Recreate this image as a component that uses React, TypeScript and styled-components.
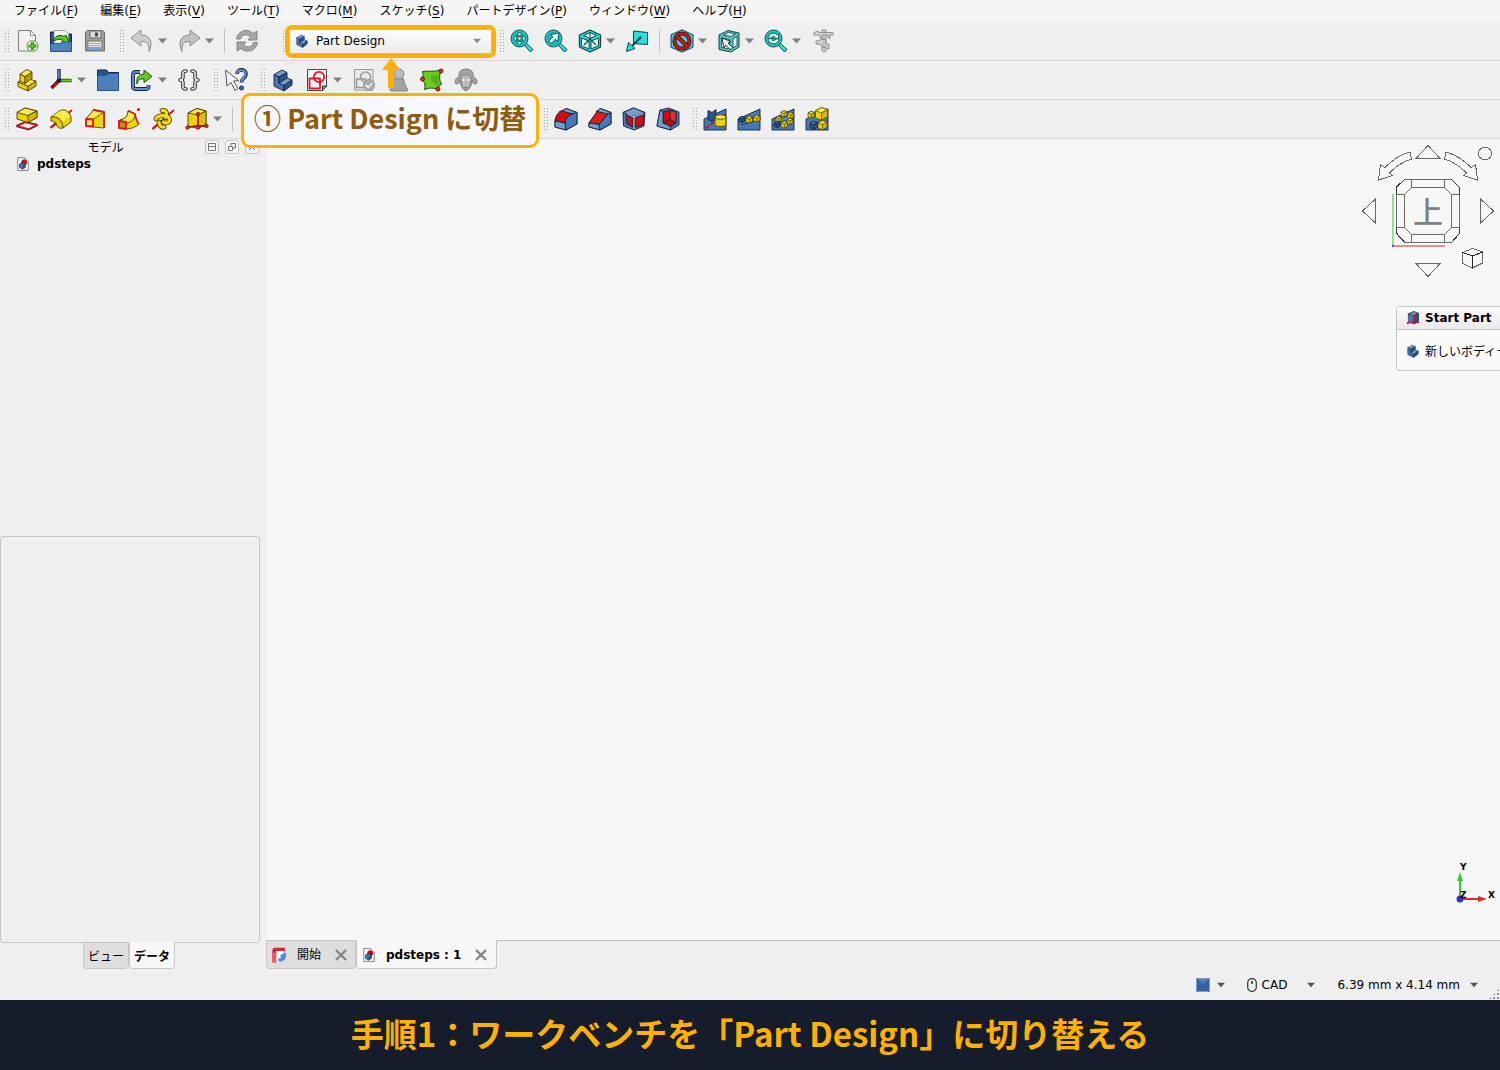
import React from "react";
import styled, { createGlobalStyle } from "styled-components";

const ui = `"DejaVu Sans", "Noto Sans CJK JP", sans-serif`;
const jp = `"Noto Sans CJK JP", "Noto Sans", sans-serif`;
const line = "#c6c6c6";
const amber = "#ffb000";

const Global = createGlobalStyle`
  * { box-sizing: border-box; }
  body { margin: 0; background: #efefef; color: #000; font: 12px/16px ${ui}; }
  button, select { font: inherit; color: inherit; }
  svg { display: block; flex: none; }
`;

/* ---------- layout ---------- */
const Page = styled.div`
  display: flex;
  flex-direction: column;
  min-height: 100vh;
  overflow: hidden;
`;
const MenuBar = styled.nav`
  display: flex;
  gap: 22px;
  height: 22px;
  padding: 0 14px;
  background: #f5f5f5;
`;
const MenuItem = styled.button`
  padding: 0;
  border: 0;
  background: none;
  font: 12px/22px ${ui};
  white-space: nowrap;
  u { text-underline-offset: 2px; }
`;
const Toolbars = styled.header`
  position: relative;
`;
const ToolRow = styled.div`
  display: flex;
  align-items: center;
  height: 39px;
  border-bottom: 1px solid #d6d6d6;
`;
const Group = styled.div<{ $before?: number }>`
  display: flex;
  align-items: center;
  padding: 0 3px 0 4px;
  margin-left: ${(p) => p.$before ?? 0}px;
`;
const Handle = styled.span`
  width: 6px;
  height: 24px;
  background-image: radial-gradient(circle, #a4a4a4 0.8px, transparent 1px);
  background-size: 3px 3px;
`;
const ToolButton = styled.button<{ $menu?: boolean }>`
  display: flex;
  align-items: center;
  width: ${(p) => (p.$menu ? 47 : 34)}px;
  height: 34px;
  padding: 0 5px;
  gap: 4px;
  border: 0;
  background: none;
`;
const Separator = styled.span`
  width: 1px;
  height: 24px;
  margin: 0 5px;
  background: #c2c2c2;
`;
const Spacer = styled.span`
  width: 298px;
`;
const WorkbenchBox = styled.label`
  display: flex;
  align-items: center;
  position: relative;
  width: 203px;
  height: 25px;
  margin-left: 1px;
  padding-left: 5px;
  border: 1px solid #b9b9c4;
  border-radius: 3px;
  background: linear-gradient(#fcfcfc, #ececec);
  box-shadow: 0 0 0 4px ${amber};
`;
const WorkbenchSelect = styled.select`
  flex: 1;
  height: 23px;
  padding: 0 7px;
  border: 0;
  background: none;
  appearance: none;
`;
const BoxArrow = styled.span`
  display: flex;
  padding-right: 10px;
`;
const Callout = styled.div`
  position: absolute;
  z-index: 2;
  left: 241px;
  top: 71px;
  padding: 0 10px 5px;
  border: 3px solid ${amber};
  border-radius: 9px;
  background: #f7f8fd;
  color: #8f5b0c;
  font: 700 27px/44px ${jp};
  white-space: nowrap;
`;
const CalloutArrow = styled.svg`
  position: absolute;
  z-index: 3;
  left: 382px;
  top: 36px;
`;
const Main = styled.main`
  flex: 1;
  display: flex;
`;
const Side = styled.aside`
  display: flex;
  flex-direction: column;
  flex: none;
  width: 260px;
  margin-right: 6px;
`;
const DockTitle = styled.div`
  display: flex;
  align-items: center;
  height: 16px;
  gap: 6px;
  padding: 0 1px 0 12px;
  span { flex: 1; text-align: center; font: 12px/18px ${jp}; }
`;
const DockButton = styled.button`
  display: grid;
  place-items: center;
  width: 14px;
  height: 14px;
  padding: 0;
  border: 1px solid #c8c8c8;
  border-radius: 2px;
  background: #f4f4f4;
`;
const Tree = styled.ul`
  flex: 1;
  margin: 0;
  padding: 0 0 0 16px;
  list-style: none;
`;
const TreeItem = styled.li`
  display: flex;
  align-items: center;
  gap: 7px;
  height: 18px;
  font-weight: 700;
`;
const PropertyBox = styled.section`
  height: 407px;
  border: 1px solid ${line};
  border-radius: 3px;
`;
const SideTabs = styled.div`
  display: flex;
  justify-content: center;
  height: 58px;
  padding: 0 2px 31px 0;
  margin-top: -1px;
`;
const SideTab = styled.button<{ $on?: boolean }>`
  height: 27px;
  padding: 0 4px;
  border: 1px solid ${line};
  border-top-color: ${(p) => (p.$on ? "#f7f7f7" : line)};
  border-radius: 0 0 4px 4px;
  background: ${(p) => (p.$on ? "#f7f7f7" : "#dedede")};
  font: ${(p) => (p.$on ? 700 : 400)} 12px/24px ${jp};
`;
const Work = styled.div`
  flex: 1;
  min-width: 0;
  display: flex;
  flex-direction: column;
`;
const View = styled.section`
  position: relative;
  flex: 1;
  overflow: hidden;
  background: #f7f7f7;
  border-bottom: 1px solid #bdbdbd;
`;
const NavCube = styled.svg`
  position: absolute;
  top: 0;
  right: 0;
`;
const AxisCross = styled.svg`
  position: absolute;
  right: 0;
  bottom: 30px;
`;
const TaskPanel = styled.section`
  position: absolute;
  top: 167px;
  right: -6px;
  width: 110px;
  height: 65px;
  border: 1px solid ${line};
  border-radius: 3px;
  background: #fafafa;
  overflow: hidden;
  white-space: nowrap;
`;
const TaskTitle = styled.h2`
  display: flex;
  align-items: center;
  gap: 5px;
  height: 23px;
  margin: 0;
  padding-left: 9px;
  border-bottom: 1px solid ${line};
  background: linear-gradient(#fbfbfb, #e9e9e9);
  font: 700 12px/22px ${ui};
`;
const TaskAction = styled.button`
  display: flex;
  align-items: center;
  gap: 5px;
  height: 41px;
  padding: 0 0 0 9px;
  border: 0;
  background: none;
  font: 12px/24px ${jp};
  white-space: nowrap;
`;
const DocTabs = styled.div`
  display: flex;
  height: 29px;
  margin-top: -1px;
  position: relative;
`;
const DocTab = styled.div<{ $on?: boolean }>`
  display: flex;
  align-items: center;
  gap: 10px;
  height: 29px;
  padding: ${(p) => (p.$on ? "0 8px 0 5px" : "0 7px 0 4px")};
  border: 1px solid ${line};
  border-top-color: ${(p) => (p.$on ? "#f7f7f7" : line)};
  border-radius: 0 0 4px 4px;
  background: ${(p) => (p.$on ? "#f7f7f7" : "#dedede")};
  font-weight: ${(p) => (p.$on ? 700 : 400)};
`;
const TabClose = styled.button`
  display: flex;
  margin-left: 3px;
  padding: 0;
  border: 0;
  background: none;
`;
const StatusBar = styled.footer`
  position: relative;
  display: flex;
  align-items: center;
  justify-content: flex-end;
  height: 31px;
  padding: 0 22px 0 0;
`;
const StatusButton = styled.button<{ $gap?: number }>`
  display: flex;
  align-items: center;
  gap: ${(p) => p.$gap ?? 4}px;
  margin-left: 22px;
  padding: 0;
  border: 0;
  background: none;
  white-space: nowrap;
`;
const StatusLabel = styled.span`
  display: flex;
  align-items: center;
  gap: 5px;
`;
const Grip = styled.span`
  position: absolute;
  right: 0;
  bottom: 0;
  width: 12px;
  height: 12px;
  background-image: radial-gradient(circle, #8c8c8c 1px, transparent 1.2px);
  background-size: 4px 4px;
  clip-path: polygon(100% 0, 100% 100%, 0 100%);
`;
const Caption = styled.div`
  display: flex;
  justify-content: center;
  height: 70px;
  background: #151c2b;
  color: ${amber};
  font: 700 33px/66px ${jp};
  white-space: nowrap;
`;

/* ---------- drawings ---------- */
const K = "#10202c";
const Y1 = "#fce94f", Y2 = "#edd400", Y3 = "#b89a00", YK = "#4a4100";
const B1 = "#729fcf", B2 = "#4478b6", B3 = "#28548f", BK = "#12233a";
const R1 = "#ef2929", R2 = "#d40c0c";
const C1 = "#2fdcdc", C2 = "#10a8aa", CK = "#0b4648";

const I = ({ children, s = 24 }: { children: React.ReactNode; s?: number }) => (
  <svg width={s} height={s} viewBox="0 0 24 24" fill="none" strokeLinejoin="round" aria-hidden="true">{children}</svg>
);
const Down = ({ c = "#808080", w = 9 }: { c?: string; w?: number }) => (
  <svg width={w} height="6" viewBox="0 0 9 6" aria-hidden="true"><path d="M0 .5h9L4.500 5.500z" fill={c} /></svg>
);

const bodyShape = (
  <g stroke={BK} strokeWidth=".9">
    <path d="M3 6.500l5 2.500v6l5 2.500V23L3 18z" fill={B2} />
    <path d="M3 6.500L11 2l5 2.500L8 9z" fill={B1} />
    <path d="M8 9l8-4.500V10l-8 5z" fill={B3} />
    <path d="M8 15l8-5 5 2-8 5.500z" fill={B1} />
    <path d="M13 17.500l8-5.500v5l-8 6z" fill={B3} />
  </g>
);
const lens = (
  <g>
    <path d="M14 16l2-2 7 6.500-2.500 2.500z" fill={C1} stroke={CK} />
    <circle cx="9.500" cy="9.500" r="8" fill={C1} stroke={C2} strokeWidth="1" />
    <circle cx="9.500" cy="9.500" r="8.500" stroke={CK} strokeWidth=".9" />
    <circle cx="9.500" cy="9.500" r="6.300" fill="#1fb4b6" stroke={C2} />
  </g>
);
const cubeWire = (
  <g stroke={CK}>
    <path d="M12 1l10.500 5v12L12 23 1.500 18V6z" fill={C1} strokeWidth="1.300" />
    <path d="M12 3.500l6.500 3-6.500 3-6.500-3z M3.500 9L11 12v8L3.500 16.800z M20.500 9L13 12v8l7.500-3.200z" fill="#e8f5f5" strokeWidth="1" />
    <path d="M12 3v7l-6 6M12 10l6 6" strokeWidth="1.100" />
  </g>
);
const slope = <path d="M1 23V12L23 2v21z" fill={B2} stroke={BK} strokeWidth=".9" />;
const miniCube = (x: number, y: number, s: number, blue?: boolean) => (
  <g transform={`translate(${x} ${y}) scale(${s})`} stroke={blue ? BK : YK} strokeWidth={0.7 / s}>
    <path d="M0 3l5-2.500L10 2v6l-5 3-5-2z" fill={blue ? B3 : Y2} />
    <path d="M0 3l5-2.500L10 2 5 5z" fill={blue ? B2 : Y1} />
    <path d="M5 5l5-3v6l-5 3z" fill={blue ? B3 : "#d4b800"} />
  </g>
);
const docPage = (
  <g>
    <path d="M3 1h12l6 6v16H3z" fill="#f8f8f8" stroke="#777" strokeWidth="1.500" />
    <path d="M15 1v6h6" fill="#ddd" stroke="#999" />
    <circle cx="14" cy="9" r="4.500" fill={R2} stroke="#600" />
    <path d="M6 12l5-2 5 2v6l-5 3-5-3z" fill={B2} stroke={BK} />
    <path d="M11 14l5-2v6l-5 3z" fill={B3} />
  </g>
);

const ic: Record<string, React.ReactNode> = {
  new: (
    <g>
      <path d="M3.500 1.500h12l5 5V22h-17z" fill="#f1f1ef" stroke="#7b7e79" />
      <path d="M15.500 1.500l5 5h-5z" fill="#fff" stroke="#777" strokeWidth=".8" />
      <circle cx="17.500" cy="17" r="5.500" fill="#eef6e8" stroke="#477a38" strokeWidth=".8" />
      <path d="M17.500 13v8M13.500 17h8" stroke="#2f7d12" strokeWidth="3" />
      <path d="M17.500 13.700v6.600M14.200 17h6.600" stroke="#5cc81e" strokeWidth="1.500" />
    </g>
  ),
  open: (
    <g>
      <path d="M1.500 22V3h5l2 2h14v17z" fill={B3} stroke={BK} />
      <path d="M5 16V1.500h11l3.500 3V16z" fill="#f4f4f4" stroke="#888" strokeWidth=".8" />
      <path d="M4 13c1-6 7-8 11-5.500l2-1.500 3.500 8-8.500 0 2-2.500c-4-2-7-1-10 1.500z" fill="#5bc81c" stroke="#245010" />
      <path d="M1.500 14.500H12l1-1.500h9.500v9.500h-21z" fill="#4f83bd" stroke={B3} />
    </g>
  ),
  save: (
    <g>
      <path d="M2.500 3l2-1.500h15l2 1.500v19h-19z" fill="#9c9f9b" stroke="#6e6e6e" />
      <path d="M7 2h11v7H7z" fill="#d8d8d6" stroke="#6b6b6b" />
      <path d="M12 3.500h3v4h-3z" fill="#4a4a4a" />
      <path d="M5 12h14v9H5z" fill="#e8e8e8" stroke="#777" />
      <path d="M6.500 14.500h11M6.500 16.500h11" stroke="#aaa" />
      <path d="M5.500 18h13v3h-13z" fill="#7b9ed0" />
    </g>
  ),
  undo: <path d="M1 9L11 1v5c8 0 13 6 8 16.500C19.500 15 17 12 11 12.500V17z" fill="#cdcdcd" stroke="#8c8c8c" />,
  redo: <path d="M23 9L13 1v5C5 6 0 12 5 22.500 4.500 15 7 12 13 12.500V17z" fill="#c2c2c2" stroke="#8c8c8c" />,
  refresh: (
    <g fill="#a6a6a6" stroke="#7c7c7c" strokeWidth=".9">
      <path d="M1.500 10C3 1 13-1 18 4.500L22 2v9h-9l2.500-3C11.500 4 6.500 6 5.500 10z" />
      <path d="M22.500 13.500C21 22.500 11 24.500 6 19.500L2 22v-9h9l-2.500 3c4 3.500 9 2 10-2.500z" />
    </g>
  ),
  fit: (
    <g>{lens}<path d="M9.500 3.500l2.700 3H6.800zM9.500 15.500l2.700-3H6.800zM3.500 9.500l3-2.700v5.400zM15.500 9.500l-3-2.700v5.400z" fill="#e4ffff" stroke={CK} strokeWidth=".7" /><path d="M8 8h3v3H8z" fill="#e4ffff" stroke={CK} strokeWidth=".7" /></g>
  ),
  fitSel: <g>{lens}<path d="M15 4l-1.500 8.500-2.200-2.200-4.300 4.200L4.700 12 9 7.900 6.700 5.600z" fill="#e8ffff" stroke={CK} strokeWidth=".9" /></g>,
  iso: cubeWire,
  align: (
    <g>
      <path d="M8.500 2l14 1.500v12l-14-1z" fill={C1} stroke={CK} />
      <path d="M16 8l-9 9" stroke={CK} strokeWidth="2" />
      <path d="M1.500 22.500l2-9 6.500 6z" fill={C1} stroke={CK} />
      <path d="M13.500 8l3-.5-.5 3z" fill={CK} />
    </g>
  ),
  draw: (
    <g>
      <path d="M12 .8l11 5v12.400l-11 5-11-5V5.800z" fill={C1} stroke={CK} />
      <circle cx="12" cy="12" r="7.500" stroke="#400" strokeWidth="4" />
      <circle cx="12" cy="12" r="7.500" stroke="#d31515" strokeWidth="2.500" />
      <path d="M7 7l10 10" stroke="#400" strokeWidth="4" />
      <path d="M6.500 6.500l11 11" stroke="#d31515" strokeWidth="2.500" />
    </g>
  ),
  select: (
    <g>
      <path d="M2 6l9-4.500L22 4v14l-8 5-12-2.500z" fill="#5cc0c0" stroke={CK} />
      <path d="M4.500 9l8 1.500v9.500l-8-1.500zM16 10l4-2.500V16l-4 3zM6.500 6l5-2.500L18.500 5 14 7.500z" fill="#dff3f3" stroke={CK} strokeWidth=".8" />
      <path d="M5 9l9 3.500-3 1.500 4.500 4.500-2.300 2.300L8.700 16 7 19z" fill="#eee" stroke={K} strokeWidth=".9" />
    </g>
  ),
  viewSync: <g>{lens}<path d="M4 9c1-5 6.500-6 9-3l1.500-1v4.500H10l1.300-1.500C9 6.500 7.500 7.500 7 9zM15 10c-1 5-6.500 6-9 3L4.500 14V9.500H9L7.700 11c2 1.500 3.500.5 4.300-1z" fill="#dff" stroke={CK} strokeWidth=".7" /></g>,
  caliper: (
    <g fill="#d0d0d0" stroke="#8b8b8b" strokeWidth=".9">
      <path d="M11 1h4v21l-2 1-2-1z" />
      <path d="M3 3.500l4-1.500 1 1.500h14v2.500h-3v4l-2-1.500V6h-6v6L8 6H3z" />
      <path d="M5 12l6-1.500h4V15h3v5l-3-1v-1h-4v-1.500L8 15H5z" />
      <path d="M13 8v12" stroke="#777" strokeDasharray="1 1" />
    </g>
  ),
  part: (
    <g stroke={YK} strokeWidth=".9">
      <path d="M3 14l7-4 11 3-8 5.500z" fill={Y1} />
      <path d="M3 14l10 4.500V23L3 18.500z" fill={Y2} />
      <path d="M13 18.500l8-5.500v5l-8 5z" fill="#d4b800" />
      <path d="M5 6l5 2.500v7L5 13z" fill={Y2} />
      <path d="M10 8.500L17 4v6.500l-7 5z" fill={Y3} />
      <path d="M5 6l7-4.500L17 4l-7 4.500z" fill={Y1} />
    </g>
  ),
  lcs: (
    <g strokeLinecap="butt">
      <path d="M10 13V1" stroke={BK} strokeWidth="3.400" /><path d="M10 13V1.700" stroke="#4f83bd" strokeWidth="1.900" />
      <path d="M10 12.500h12.500" stroke="#173808" strokeWidth="3.400" /><path d="M10 12.500H22" stroke="#73d216" strokeWidth="1.900" />
      <path d="M10 12.500l-7.500 7.500" stroke="#300" strokeWidth="3.400" /><path d="M10 12.500l-7 7" stroke={R2} strokeWidth="2" />
      <circle cx="10" cy="12.500" r="2.300" fill="#222" />
    </g>
  ),
  folder: (
    <g stroke={B3}>
      <path d="M1.500 22V2h9l2 2.500h10V22z" fill={B3} stroke={BK} />
      <path d="M1.500 7.500h9l2-2h10V22.500h-21z" fill="#4c80bb" />
    </g>
  ),
  link: (
    <g>
      <path d="M10 4H5.500Q3 4 3 6.500v12Q3 21 5.500 21h10.500q2.500 0 2.500-2.500V17" stroke={BK} strokeWidth="3.800" />
      <path d="M10 4H5.500Q3 4 3 6.500v12Q3 21 5.500 21h10.500q2.500 0 2.500-2.500V17" stroke="#5b8cc8" strokeWidth="2" />
      <path d="M7 16C6 9 9 6 14 6V2l8 6.500-8 6V11c-4-.5-6 1-7 5z" fill="#62cc20" stroke="#234d10" />
    </g>
  ),
  braces: (
    <g strokeLinecap="round">
      {["#2e3436", "#fff"].map((c, i) => (
        <path key={c} stroke={c} strokeWidth={i ? 1.4 : 3.6} d="M9 3C5 3 6 6 6 8.500 6 11 5 12 3 12c2 0 3 1 3 3.500C6 18 5 21 9 21M15 3c4 0 3 3 3 5.500 0 2.500 1 3.500 3 3.500-2 0-3 1-3 3.500 0 2.500 1 5.500-3 5.500" />
      ))}
    </g>
  ),
  help: (
    <g>
      <path d="M13 6c0-5.500 9-5.500 9 0 0 4-4.500 4-4.500 8.500" stroke={BK} strokeWidth="3.600" />
      <path d="M13 5.500c.5-4.500 8.500-4.500 8.500 .5 0 4-4 4-4 8" stroke="#6b98cf" strokeWidth="2" />
      <circle cx="17.500" cy="20" r="2" fill="#3f70b0" stroke={BK} />
      <path d="M1.500 2l13 10.500-5 .5 4.500 7.500-3 2-4-8-4 3.500z" fill="#f3f3f3" stroke="#555" />
    </g>
  ),
  body: bodyShape,
  sketch: (
    <g>
      <path d="M2.500 1.500h19V18l-4 4.500h-15z" fill="#f3f3f3" stroke="#444" />
      <path d="M17.500 22.500V18h4z" fill="#aaa" stroke="#333" />
      <path d="M4.500 10.500h10.500v10H4.500z" stroke="#e01b24" strokeWidth="1.800" />
      <circle cx="14" cy="9" r="5.200" stroke="#e01b24" strokeWidth="1.800" />
    </g>
  ),
  sketchOk: (
    <g>
      <path d="M2.500 1.500h18.500V22H2.500z" fill="#e9e9e9" stroke="#999" />
      <path d="M4.500 11h9v8.500h-9z" stroke="#999" strokeWidth="1.500" />
      <circle cx="13.500" cy="9" r="5" stroke="#999" strokeWidth="1.500" />
      <circle cx="17" cy="17" r="5.500" fill="#aaa" stroke="#999" />
      <path d="M13.800 17l2.500 2.500 4-4.500" stroke="#eee" strokeWidth="1.800" />
    </g>
  ),
  map: (
    <g stroke="#858585">
      <path d="M5 23c-2-1-1-3 1-4l3-9h8l3 9c2 1 2 3 1 4z" fill="#a4a4a4" />
      <circle cx="13" cy="6" r="5" fill="#bbb" />
    </g>
  ),
  surface: (
    <g>
      <path d="M2.500 3.500c6-1 12 1 19-2-3 7-2 11 0 15-3 1-3 2-3 6-4-3-9-3-14-1C6 17 4 14 2 11c2-2 1-5 .500-7.500z" fill="#6cc91e" stroke="#1c4a08" />
      <path d="M11 8c4 0 7-1 8-3-1 6-1 9 0 13-4-1-8-4-8-10z" fill="#3da311" opacity=".6" />
      {[[21, 3], [2.500, 11], [18, 21]].map(([x, y]) => <circle key={x} cx={x} cy={y} r="2" fill={R1} stroke="#500" strokeWidth=".8" />)}
    </g>
  ),
  sheep: (
    <g stroke="#7e7e7e" strokeWidth=".9">
      <path d="M5 9C4 3 8 1 12 1s8 2 7 8c4 1 5 5 3 7-3 0-4-2-4-4 0 5-2 9-6 11-4-2-6-6-6-11 0 2-1 4-4 4-2-2-1-6 3-7z" fill="#a2a2a2" />
      <path d="M7 9c2-3 8-3 10 0 0 6-1 11-5 13-4-2-5-7-5-13z" fill="#bababa" strokeWidth=".8" />
      <path d="M8.500 12h2M13.500 12h2" stroke="#fff" strokeWidth="2" /><path d="M10.500 19l1.500 1 1.500-1" stroke="#555" />
    </g>
  ),
  pad: (
    <g>
      <path d="M2.500 19l8-3.500 11 2.500-8 4z" stroke="#500" strokeWidth="2.600" /><path d="M2.500 19l8-3.500 11 2.500-8 4z" fill="#eee" stroke="#e01b24" strokeWidth="1.300" />
      <g stroke={YK} strokeWidth=".9"><path d="M2 5.500V12l11 3.500 9-5V4l-12-3z" fill={Y2} /><path d="M2 5.500L10 1l12 3-9 4.500z" fill={Y1} /><path d="M13 8.500L22 4v6.500l-9 5z" fill="#d4b800" /></g>
    </g>
  ),
  revolve: (
    <g>
      <path d="M1.500 21L23 3" stroke={R2} strokeWidth="1.800" />
      <path d="M2 10l9-6.500c6-2 9 1 11 6.500v5l-8 6c-1-7-5-11-12-11z" fill={Y2} stroke={YK} strokeWidth=".9" />
      <path d="M2.500 9.800L11 4c5-1.500 8 1 10 5.500l-7 5C12 10 8 8.500 2.500 9.800z" fill={Y1} />
      <path d="M2 10c7-1 12 4 12 11-4 1-6-1-7-4-1-2-3-3-5-3z" fill="#e4c800" stroke={YK} strokeWidth=".9" />
      <path d="M2 20.500L7 16" stroke={R2} strokeWidth="1.800" />
    </g>
  ),
  loft: (
    <g>
      <path d="M3 12l7.500-9L21 5v16l-11-1-7-1z" fill={Y2} stroke={YK} strokeWidth=".8" />
      <path d="M3 12l7.500-9L21 5l-11 7.500z" fill={Y1} stroke={YK} strokeWidth=".8" />
      <path d="M10 2.800L21 5v16" stroke="#d81920" strokeWidth="1.900" />
      <path d="M3 12l7 .5v7L3 19z" fill={Y1} stroke="#d81920" strokeWidth="1.900" />
    </g>
  ),
  pipe: (
    <g>
      <path d="M3 13c5-1 8-4 8-9l7 3c1 5 2 8 4 10-3 3-8 5-13 5z" fill={Y2} stroke={YK} strokeWidth=".9" />
      <path d="M3 13c5-1 8-4 8-9l7 3c0 5-4 9-9 9z" fill={Y1} stroke={YK} strokeWidth=".8" />
      <path d="M11 3.500l7 3.500c1 5 2 8 4 10" stroke="#d81920" strokeWidth="1.500" />
      <path d="M2 14l7 1v7l-7-1z" fill={Y3} stroke="#d81920" strokeWidth="2" />
      <circle cx="21.500" cy="2.500" r="1.500" fill={R2} />
    </g>
  ),
  helix: (
    <g>
      <path d="M1.500 22L23 3" stroke={R2} strokeWidth="1.700" />
      {[YK, Y2, Y1].map((c, i) => (
        <path key={c} stroke={c} strokeWidth={[4.8, 3.2, 1][i]} strokeLinecap="round" d="M11 3.500c4-1 6 3 3.500 7M5 12c1-4 12-5 13.500 0 .500 4-3.500 5-6 3M8 15c0 4 3 6 5 5" />
      ))}
      <path d="M1.500 22l5-4.500" stroke={R2} strokeWidth="1.700" />
    </g>
  ),
  primitive: (
    <g>
      <path d="M3 6v13l10 2.500 8-4.500V4l-9-2.500z" fill={Y2} stroke={YK} strokeWidth=".9" />
      <path d="M3 6l9-4.500L21 4l-8 4z" fill={Y1} stroke={YK} strokeWidth=".9" />
      <path d="M13 8l8-4v13l-8 4.500z" fill="#dcc000" stroke={YK} strokeWidth=".9" />
      <path d="M13 7v11.500L2.500 20.500M13 18.500l8.500 1" stroke="#b40808" strokeWidth="1.500" />
      {[[13, 7], [13, 20.5], [2.500, 20.5], [21.500, 19]].map(([x, y]) => <circle key={`${x}-${y}`} cx={x} cy={y} r="1.800" fill={R1} stroke="#500" strokeWidth=".6" />)}
    </g>
  ),
  fillet: (
    <g stroke={BK} strokeWidth=".9">
      <path d="M1 20v-6C2 8 5 5 12.500 1.500l10.500 4V17l-11 6z" fill={B2} />
      <path d="M5 5l7.500-3.500 10.500 4-4 2z" fill={B1} />
      <path d="M1 14C2 8 4 5.500 8 4l11 3c-5 1-7 4-8 9z" fill={R2} />
      <path d="M1 14l10 2 1 7-11-3z" fill={B1} />
      <path d="M11 16c1-6 4-8.500 12-10.500V17l-11 6z" fill={B2} />
    </g>
  ),
  chamfer: (
    <g stroke={BK} strokeWidth=".9">
      <path d="M1 16L12 1.500l11 4V17l-11 6-11-3z" fill={B2} />
      <path d="M8 4.500l4.500-3 10.500 4-4 2z" fill={B1} />
      <path d="M1 16L9 4.500l11 2.500-9 10.500z" fill="#e01b1b" />
      <path d="M1 16l10 1.500 1 5.500-11-3z" fill={B1} />
      <path d="M11 17.500L20 7l3-1.500V17l-11 6z" fill={B2} />
    </g>
  ),
  draft: (
    <g stroke={BK} strokeWidth=".9">
      <path d="M1 5.500l10.500-4.500L23 5.500l-1 13.500-10 4-10.500-4z" fill={B2} />
      <path d="M1 5.500l10.500-4.500L23 5.500l-11 4z" fill={B1} />
      <path d="M4 8l7 3v9l-6-3z" fill="#c01414" /><path d="M13 11l9-3.500-.5 10-8.500 3z" fill={R2} />
      <path d="M12 10v12M5 6.500l7 3.500 9.500-3.500" stroke="#e8eef5" strokeWidth=".8" />
    </g>
  ),
  shell: (
    <g stroke={BK} strokeWidth=".9">
      <path d="M4 3l8.500-2L23 5v13l-8.500 5L1 19z" fill={B2} />
      <path d="M7 5l7-2 6 2.500V16l-6 3.500L7 16z" fill={R2} />
      <path d="M14 3l6 2.500V16l-6-3.500z" fill={R1} />
      <path d="M14 12.500l6 3.500-6 3.500L7 16z" fill="#b80d0d" />
      <path d="M4 3l3 2v11l7.500 3.500V23L1 19z" fill={B1} />
    </g>
  ),
  mirror: (
    <g>
      {slope}
      <path d="M5 3.500l4 2 4-3v9l-4 3-4-2z" fill={B3} stroke={BK} strokeWidth=".9" />
      <path d="M3 21L23 7" stroke={R2} strokeWidth="1.800" strokeDasharray="4 1.500" />
      <path d="M12 10.500v7.500c1 2 10 2 11 0v-7.500z" fill={Y2} stroke={YK} strokeWidth=".9" /><ellipse cx="17.500" cy="10" rx="5.500" ry="2.200" fill={Y1} stroke={YK} strokeWidth=".9" />
    </g>
  ),
  linear: <g>{slope}<path d="M4 18l17-5" stroke={BK} strokeWidth=".8" />{miniCube(2, 9, 0.6, true)}{miniCube(9, 9, 0.65)}{miniCube(16.5, 8, 0.65)}</g>,
  polar: <g>{slope}<path d="M1 16L23 9" stroke={B1} />{miniCube(5, 9, 0.55)}{miniCube(10, 3.5, 0.6)}{miniCube(16.5, 5, 0.6)}{miniCube(16, 11, 0.6)}{miniCube(10, 14, 0.65)}{miniCube(3, 14, 0.6, true)}</g>,
  multi: <g>{slope}{miniCube(10.5, 0, 1.2)}{miniCube(3, 4, 0.65)}{miniCube(5, 14, 0.75, true)}{miniCube(13, 13, 0.9)}</g>,
  doc: docPage,
  start: (
    <g stroke={BK}>
      <path d="M4 5l9-4 8 3v14l-8 4-9-3z" fill={B2} />
      <path d="M4 5l9-4 8 3-7 4z" fill={B1} /><path d="M14 8l7-4v14l-7 4z" fill={B3} />
      <path d="M14 7v11L2 21M14 18l9 2" stroke={R2} strokeWidth="1.800" />
      <circle cx="3" cy="21" r="2" fill={R1} stroke="none" /><circle cx="14" cy="7" r="2" fill={R1} stroke="none" />
    </g>
  ),
  logo: (
    <g>
      <path d="M2 5q0-4 4-4h15v6H9v16H2z" fill="#cb2c3c" />
      <path d="M2 8h6v15H2z" fill="#fb5261" />
      <path d="M8 6h12v4h-1l-1 1h-3v1h3v4h-6v6H8z" fill="#fff" />
      <path d="M14 12l4-1 1-3 2 1 2 0-1 3 1 3-2 2 0 3-3 0-2 2-3-1-2 1v-5h4z" fill="#408ee0" />
    </g>
  ),
};

type Tool = [string, string, boolean?] | "|";
const Tools = ({ items }: { items: Tool[] }) => (
  <>
    {items.map((t, i) =>
      t === "|" ? <Separator key={i} /> : (
        <ToolButton key={i} $menu={t[2]} aria-label={t[1]}>
          <I>{ic[t[0]]}</I>
          {t[2] && <Down />}
        </ToolButton>
      )
    )}
  </>
);

const Bar = ({ items, before }: { items: Tool[]; before?: number }) => (
  <Group $before={before}><Handle /><Tools items={items} /></Group>
);

const menus: [string, string][] = [
  ["ファイル", "F"], ["編集", "E"], ["表示", "V"], ["ツール", "T"], ["マクロ", "M"],
  ["スケッチ", "S"], ["パートデザイン", "P"], ["ウィンドウ", "W"], ["ヘルプ", "H"],
];

const Cross = () => (
  <svg width="14" height="14" viewBox="0 0 14 14" aria-hidden="true"><path d="M2 2l10 10M12 2L2 12" stroke="#858585" strokeWidth="2.400" /></svg>
);

const Cube = () => (
  <NavCube width="140" height="145" viewBox="1360 139 140 145" fill="none" stroke="#6a6a6a" shapeRendering="crispEdges" aria-label="ナビゲーションキューブ">
    <path d="M1428 145.500l12 13h-24zM1428 276.500l12-13h-24zM1362.500 211l13-12v24zM1493.500 211l-13-12v24z" />
    <circle cx="1485" cy="153.500" r="6.500" />
    <path d="M1410 152Q1396 156 1385 167.500L1380.500 164.500L1378.500 180L1392.500 175.500L1389.500 173Q1399 163 1411.500 159z" />
    <path d="M1446 152Q1460 156 1471 167.500L1475.500 164.500L1477.500 180L1463.500 175.500L1466.500 173Q1457 163 1444.500 159z" />
    <path d="M1404.500 179.500h47l8 8v46l-8 9h-47l-8-9v-46z" />
    <path d="M1411.500 187.500h33l7 7v33l-7 7h-33l-7-7v-33zM1411.500 179.500v8M1444.500 179.500v8M1411.500 234.500v8M1444.500 234.500v8M1396.500 194.500h8M1396.500 227.500h8M1451.500 194.500h8M1451.500 227.500h8" />
    <path d="M1396.500 194v-7l8-7.500M1451.500 179.500l8 8v7M1396.500 228v5l8 9M1451.500 242.500l8-9v-6" stroke="#333" />
    <path d="M1393 194v51" stroke="#8fe08f" strokeWidth="2" />
    <path d="M1393 246h52" stroke="#e48f8f" strokeWidth="2" />
    <path d="M1392 245h2v2h-2z" fill="#4a4ad8" stroke="none" />
    <text x="1428" y="223" textAnchor="middle" fontSize="30" fontWeight="500" fontFamily="Noto Sans CJK JP, sans-serif" fill="#808080" stroke="none">上</text>
    <path d="M1462.500 252.500l10-4 10 3.500v11l-10 5-10-4.500z" />
    <path d="M1462.500 252.500l10 3.500 10-4M1472.500 256v12" stroke="#222" />
  </NavCube>
);

const Axes = () => (
  <AxisCross width="50" height="50" viewBox="1450 860 50 50" fontFamily="DejaVu Sans, sans-serif" fontSize="9" fontWeight="700" aria-label="座標軸">
    <path d="M1460 899v-22" stroke="#33cc33" strokeWidth="2" />
    <path d="M1457 881l3-9 3 9z" fill="#33cc33" stroke="none" />
    <path d="M1460 899h20" stroke="#cc3333" strokeWidth="2" />
    <path d="M1478 896l9 3-9 3z" fill="#cc3333" />
    <circle cx="1460" cy="899" r="3.500" fill="#3333cc" />
    <text x="1460" y="870">Y</text>
    <text x="1488" y="898">X</text>
    <text x="1460" y="898">Z</text>
  </AxisCross>
);

export default function App() {
  return (
    <Page>
      <Global />
      <MenuBar>
        {menus.map(([name, key]) => (
          <MenuItem key={key}>{name}(<u>{key}</u>)</MenuItem>
        ))}
      </MenuBar>

      <Toolbars>
        <ToolRow>
          <Bar items={[["new", "新規"], ["open", "開く"], ["save", "保存"]]} />
          <Bar items={[["undo", "元に戻す", true], ["redo", "やり直す", true], "|", ["refresh", "更新"]]} />
          <Group $before={11}>
            <Handle />
            <WorkbenchBox>
              <I s={14}>{ic.body}</I>
              <WorkbenchSelect aria-label="ワークベンチ" defaultValue="Part Design">
                <option>Part Design</option>
              </WorkbenchSelect>
              <BoxArrow><Down c="#8c8c8c" w={8} /></BoxArrow>
            </WorkbenchBox>
          </Group>
          <Bar
            items={[
              ["fit", "全てにフィット"], ["fitSel", "選択にフィット"], ["iso", "等角図", true], ["align", "選択に整列"], "|",
              ["draw", "描画スタイル", true], ["select", "選択", true], ["viewSync", "表示", true], ["caliper", "計測"],
            ]}
          />
        </ToolRow>
        <ToolRow>
          <Bar items={[["part", "パーツ"], ["lcs", "座標系", true], ["folder", "グループ"], ["link", "リンク", true], ["braces", "変数"]]} />
          <Bar items={[["help", "ヘルプ"]]} />
          <Bar
            items={[
              ["body", "ボディー"], ["sketch", "スケッチ", true], ["sketchOk", "スケッチ検証"],
              ["map", "マップ"], ["surface", "サブシェイプ"], ["sheep", "クローン"],
            ]}
          />
        </ToolRow>
        <ToolRow>
          <Group>
            <Handle />
            <Tools
              items={[
                ["pad", "パッド"], ["revolve", "回転"], ["loft", "ロフト"], ["pipe", "パイプ"],
                ["helix", "らせん"], ["primitive", "プリミティブ", true], "|",
              ]}
            />
            <Spacer />
          </Group>
          <Bar items={[["fillet", "フィレット"], ["chamfer", "面取り"], ["draft", "抜き勾配"], ["shell", "厚み"]]} />
          <Bar items={[["mirror", "鏡像"], ["linear", "直線パターン"], ["polar", "円形パターン"], ["multi", "マルチ変換"]]} />
        </ToolRow>
        <CalloutArrow width="18" height="32" viewBox="0 0 18 32" aria-hidden="true">
          <path d="M9 0l9 12h-6v18H6V12H0z" fill={amber} />
        </CalloutArrow>
        <Callout>① Part Design に切替</Callout>
      </Toolbars>

      <Main>
        <Side>
          <DockTitle>
            <span>モデル</span>
            <DockButton aria-label="最小化">
              <svg width="8" height="8" fill="none" stroke="#777"><path d="M.5.5h7v7h-7zM.5 3.500h7" /></svg>
            </DockButton>
            <DockButton aria-label="フロート">
              <svg width="8" height="8" fill="none" stroke="#777"><path d="M.5 3.500h4v4h-4zM3 3V.5h4.500V5H5" /></svg>
            </DockButton>
            <DockButton aria-label="閉じる">
              <svg width="8" height="8" fill="none" stroke="#777"><path d="M1 1l6 6M7 1L1 7" /></svg>
            </DockButton>
          </DockTitle>
          <Tree>
            <TreeItem><I s={14}>{ic.doc}</I>pdsteps</TreeItem>
          </Tree>
          <PropertyBox aria-label="プロパティ" />
          <SideTabs>
            <SideTab>ビュー</SideTab>
            <SideTab $on>データ</SideTab>
          </SideTabs>
        </Side>
        <Work>
          <View>
            <Cube />
            <TaskPanel>
              <TaskTitle><I s={14}>{ic.start}</I>Start Part</TaskTitle>
              <TaskAction><I s={14}>{ic.body}</I>新しいボディー</TaskAction>
            </TaskPanel>
            <Axes />
          </View>
          <DocTabs>
            <DocTab>
              <I s={16}>{ic.logo}</I><span>開始</span>
              <TabClose aria-label="開始を閉じる"><Cross /></TabClose>
            </DocTab>
            <DocTab $on>
              <I s={14}>{ic.doc}</I><span>pdsteps : 1</span>
              <TabClose aria-label="pdstepsを閉じる"><Cross /></TabClose>
            </DocTab>
          </DocTabs>
          <StatusBar>
            <StatusButton $gap={7} aria-label="通知">
              <svg width="14" height="14" viewBox="0 0 14 14"><path d="M0 0h14v14H0z" fill="#3363a3" /><path d="M0 0h14L7 6z" fill="#4f80bb" /><path d="M.5.5h13v13H.5z" fill="none" stroke="#7b9cc6" /></svg>
              <Down c="#555" w={8} />
            </StatusButton>
            <StatusButton $gap={20}>
              <StatusLabel>
                <svg width="10" height="14" viewBox="0 0 10 14" fill="none" stroke="#2e3436"><rect x=".7" y=".7" width="8.600" height="12.600" rx="4" strokeWidth="1.200" /><path d="M5 3v3" strokeWidth="1.600" /></svg>
                CAD
              </StatusLabel>
              <Down c="#555" w={8} />
            </StatusButton>
            <StatusButton $gap={10}>6.39 mm x 4.14 mm<Down c="#555" w={8} /></StatusButton>
            <Grip />
          </StatusBar>
        </Work>
      </Main>
      <Caption>手順1：ワークベンチを「Part Design」に切り替える</Caption>
    </Page>
  );
}
